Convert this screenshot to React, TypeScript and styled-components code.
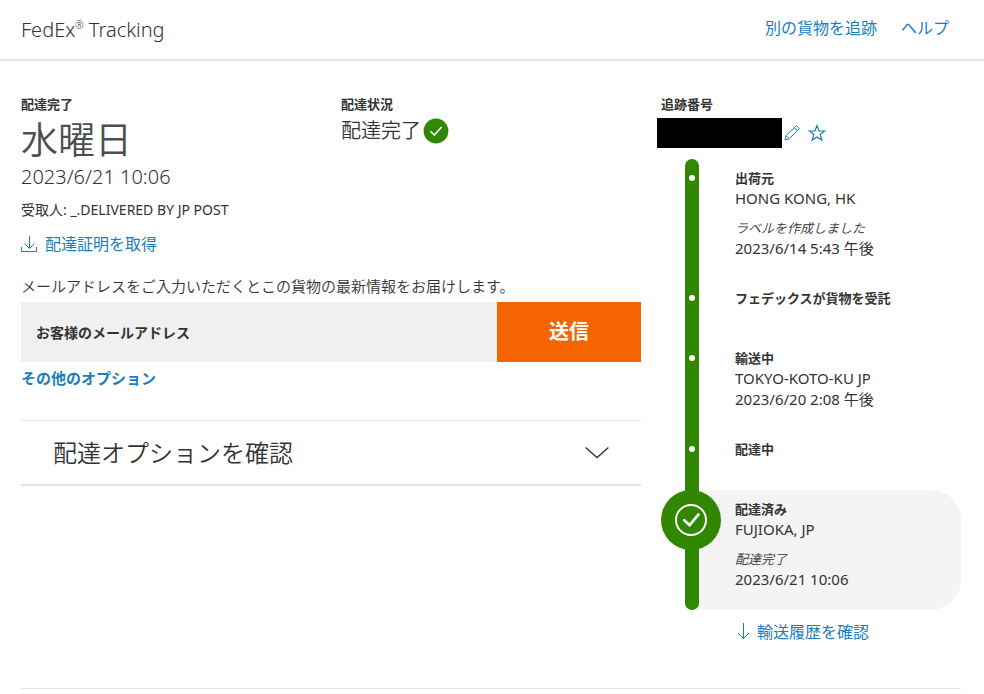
import React from "react";
import styled, { createGlobalStyle, css } from "styled-components";

const GlobalStyle = createGlobalStyle`
  *, *::before, *::after { box-sizing: border-box; }
  body {
    margin: 0;
    background: #fff;
    color: #333;
    font-family: "Noto Sans", "Noto Sans CJK JP", sans-serif;
    font-size: 14px;
    line-height: 20px;
  }
  p, h1, h2, ol { margin: 0; padding: 0; }
  button, input { font-family: inherit; border: 0; margin: 0; }
`;

const blue = "#1a7ebd";
const green = "#318700";
const rule = "#e3e3e3";

const Header = styled.header`
  display: flex;
  align-items: center;
  justify-content: space-between;
  height: 61px;
  padding: 0 35px 0 21px;
  border-bottom: 2px solid ${rule};
`;

const Title = styled.h1`
  font-size: 20px;
  line-height: 28px;
  font-weight: 300;
  sup {
    font-size: 10px;
    line-height: 0;
    vertical-align: 8px;
  }
`;

const Nav = styled.nav`
  display: flex;
  gap: 24px;
  padding-bottom: 3px;
`;

const TextLink = styled.a<{ $strong?: boolean }>`
  display: flex;
  align-items: center;
  gap: 8px;
  width: fit-content;
  color: ${blue};
  font-size: ${(p) => (p.$strong ? "15px" : "16px")};
  font-weight: ${(p) => (p.$strong ? 700 : 400)};
  line-height: 24px;
  text-decoration: none;
`;

const Main = styled.main`
  display: grid;
  grid-template-columns: repeat(3, 1fr);
  column-gap: 20px;
  align-items: start;
  margin: 0 23px 0 21px;
  padding: 33px 0 44px;
  border-bottom: 1px solid ${rule};
`;

const Details = styled.section`
  grid-column: span 2;
`;

const Summary = styled.div`
  display: grid;
  grid-template-columns: 1fr 1fr;
  column-gap: 20px;
`;

const Label = styled.h2`
  font-size: 13px;
  font-weight: 700;
  line-height: 20px;
`;

const Day = styled.p`
  margin-top: 4px;
  font-size: 37px;
  font-weight: 350;
  line-height: 44px;
  color: #4d4d4d;
`;

const DateTime = styled.p`
  font-size: 20px;
  font-weight: 300;
  line-height: 30px;
`;

const Recipient = styled.p`
  margin: 8px 0 12px;
  white-space: nowrap;
`;

const Status = styled.p`
  display: flex;
  align-items: center;
  gap: 2px;
  margin-top: 2px;
  font-size: 20px;
  font-weight: 350;
  line-height: 30px;
`;

const FormLabel = styled.label`
  display: block;
  margin-top: 18px;
  font-size: 15px;
  line-height: 24px;
  font-weight: 350;
`;

const EmailRow = styled.div`
  display: flex;
  height: 60px;
  margin: 4px 0;
`;

const EmailInput = styled.input`
  flex: 1;
  min-width: 0;
  padding: 0 15px;
  background: #f0f0f0;
  color: #333;
  font-size: 14px;
  font-weight: 700;
  &::placeholder { color: #333; opacity: 1; }
`;

const SendButton = styled.button`
  width: 144px;
  background: #f56400;
  color: #fff;
  font-size: 20px;
  font-weight: 700;
  line-height: 28px;
  cursor: pointer;
`;

const Accordion = styled.button`
  display: flex;
  align-items: center;
  justify-content: space-between;
  width: 100%;
  height: 66px;
  margin-top: 30px;
  padding: 0 32px;
  border-top: 1px solid ${rule};
  border-bottom: 2px solid ${rule};
  background: none;
  color: #333;
  font-size: 24px;
  font-weight: 350;
  line-height: 32px;
  cursor: pointer;
`;

const NumberRow = styled.div`
  display: flex;
  align-items: center;
  margin: 4px 0 11px -4px;
`;

const HiddenNumber = styled.span`
  width: 125px;
  height: 30px;
  background: #000;
`;

const IconButton = styled.button`
  display: flex;
  padding: 2px;
  background: none;
  color: ${blue};
  cursor: pointer;
  & + & { margin-left: 4px; }
`;

const Timeline = styled.ol`
  list-style: none;
`;

const Stop = styled.li<{ $current?: boolean }>`
  display: flex;
  min-height: 60px;
  ${(p) =>
    p.$current &&
    css`
      border-radius: 30px;
      background: linear-gradient(to right, transparent 30px, #f4f4f4 30px);
    `}
`;

const Rail = styled.div<{ $place?: "first" | "last" }>`
  flex: none;
  width: 14px;
  margin: 0 36px 0 24px;
  background: ${green};
  border-radius: ${(p) =>
    p.$place === "first" ? "7px 7px 0 0" : p.$place === "last" ? "0 0 7px 7px" : "0"};
`;

const Dot = styled.span`
  display: block;
  width: 6px;
  height: 6px;
  margin: 16px auto 0;
  border-radius: 50%;
  background: #fff;
`;

const Badge = styled.span`
  display: flex;
  align-items: center;
  justify-content: center;
  width: 60px;
  height: 60px;
  margin-left: -24px;
  border-radius: 50%;
  background: ${green};
`;

const StopText = styled.div`
  padding: 9px 0 20px;
`;

const StopLine = styled.p`
  font-size: 15px;
  line-height: 21px;
`;

const StopNote = styled.p`
  margin-top: 9px;
  font-size: 13px;
  font-weight: 350;
  font-style: italic;
`;

const HistoryLink = styled.div`
  display: flex;
  margin: 10px 0 0 74px;
`;

type StopData = { name: string; place?: string; note?: string; time?: string };

const stops: StopData[] = [
  { name: "出荷元", place: "HONG KONG, HK", note: "ラベルを作成しました", time: "2023/6/14 5:43 午後" },
  { name: "フェデックスが貨物を受託" },
  { name: "輸送中", place: "TOKYO-KOTO-KU JP", time: "2023/6/20 2:08 午後" },
  { name: "配達中" },
  { name: "配達済み", place: "FUJIOKA, JP", note: "配達完了", time: "2023/6/21 10:06" },
];

const StatusCheck = () => (
  <svg width="26" height="26" viewBox="0 0 26 26" fill="none" aria-hidden="true">
    <circle cx="13" cy="13" r="12.4" fill={green} />
    <path d="M7.5 13.2l3.8 3.8 7.4-8" stroke="#fff" strokeWidth="1.6" />
  </svg>
);

const BadgeCheck = () => (
  <svg width="32" height="32" viewBox="0 0 32 32" fill="none" stroke="#fff" aria-hidden="true">
    <circle cx="16" cy="16" r="15" strokeWidth="2" />
    <path d="M9.2 16.2l5.4 5 8.8-10.6" strokeWidth="2.8" strokeLinecap="round" strokeLinejoin="round" />
  </svg>
);

const DownloadIcon = () => (
  <svg width="16" height="18" viewBox="0 0 16 18" fill="none" stroke="currentColor" aria-hidden="true">
    <path d="M8.5 1v12M3.5 8.5l5 5 5-5M.5 12v4.5h15V12" />
  </svg>
);

const ArrowDownIcon = () => (
  <svg width="14" height="18" viewBox="0 0 14 18" fill="none" stroke="currentColor" aria-hidden="true">
    <path d="M8.5 0v15.5M3 10l5.5 5.5L14 10" />
  </svg>
);

const PencilIcon = () => (
  <svg width="16" height="16" viewBox="0 0 16 16" fill="none" stroke="currentColor" strokeLinejoin="round" aria-hidden="true">
    <path d="M1 15l1.2-4.4L11.6 1.4q.9-.9 1.8 0l1.2 1.2q.9.9 0 1.8L5.2 13.8zM2.2 10.6l3 3.2M10.4 2.6l3 3" />
  </svg>
);

const StarIcon = () => (
  <svg width="18" height="18" viewBox="0 0 18 18" fill="none" stroke="currentColor" aria-hidden="true">
    <path d="M9 1.6l2 5.2 5.8.2-4.6 3.5 1.6 5.6L9 13l-4.8 3.1 1.6-5.6L1.2 7 7 6.8z" strokeWidth="1.2" />
  </svg>
);

const ChevronIcon = () => (
  <svg width="24" height="14" viewBox="0 0 24 14" fill="none" stroke="currentColor" aria-hidden="true">
    <path d="M.6 1.5L12 11.5 23.4 1.5" strokeWidth="1.4" />
  </svg>
);

export default function App() {
  return (
    <>
      <GlobalStyle />
      <Header>
        <Title>
          FedEx<sup>®</sup> Tracking
        </Title>
        <Nav>
          <TextLink href="#track">別の貨物を追跡</TextLink>
          <TextLink href="#help">ヘルプ</TextLink>
        </Nav>
      </Header>
      <Main>
        <Details>
          <Summary>
            <div>
              <Label>配達完了</Label>
              <Day>水曜日</Day>
              <DateTime>2023/6/21 10:06</DateTime>
              <Recipient>受取人: _.DELIVERED BY JP POST</Recipient>
              <TextLink href="#proof">
                <DownloadIcon />
                配達証明を取得
              </TextLink>
            </div>
            <div>
              <Label>配達状況</Label>
              <Status>
                配達完了
                <StatusCheck />
              </Status>
            </div>
          </Summary>
          <form onSubmit={(e) => e.preventDefault()}>
            <FormLabel htmlFor="email">
              メールアドレスをご入力いただくとこの貨物の最新情報をお届けします。
            </FormLabel>
            <EmailRow>
              <EmailInput id="email" type="email" placeholder="お客様のメールアドレス" />
              <SendButton type="submit">送信</SendButton>
            </EmailRow>
          </form>
          <TextLink href="#options" $strong>
            その他のオプション
          </TextLink>
          <Accordion type="button" aria-expanded="false">
            配達オプションを確認
            <ChevronIcon />
          </Accordion>
        </Details>
        <section>
          <Label>追跡番号</Label>
          <NumberRow>
            <HiddenNumber />
            <IconButton type="button" aria-label="編集">
              <PencilIcon />
            </IconButton>
            <IconButton type="button" aria-label="お気に入り">
              <StarIcon />
            </IconButton>
          </NumberRow>
          <Timeline>
            {stops.map((stop, i) => {
              const last = i === stops.length - 1;
              return (
                <Stop key={stop.name} $current={last}>
                  <Rail $place={i === 0 ? "first" : last ? "last" : undefined}>
                    {last ? (
                      <Badge>
                        <BadgeCheck />
                      </Badge>
                    ) : (
                      <Dot />
                    )}
                  </Rail>
                  <StopText>
                    <Label>{stop.name}</Label>
                    {stop.place && <StopLine>{stop.place}</StopLine>}
                    {stop.note && <StopNote>{stop.note}</StopNote>}
                    {stop.time && <StopLine>{stop.time}</StopLine>}
                  </StopText>
                </Stop>
              );
            })}
          </Timeline>
          <HistoryLink>
            <TextLink href="#history">
              <ArrowDownIcon />
              輸送履歴を確認
            </TextLink>
          </HistoryLink>
        </section>
      </Main>
    </>
  );
}
